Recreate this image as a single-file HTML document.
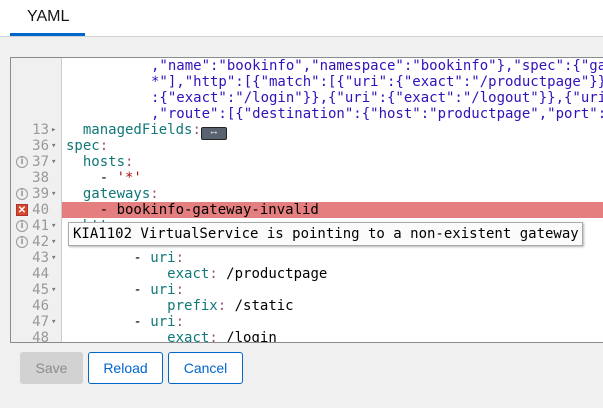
<!DOCTYPE html>
<html><head><style>
body{margin:0;width:603px;height:408px;background:#f0f0f0;font-family:"Liberation Sans",sans-serif;position:relative;overflow:hidden}
.top{position:absolute;left:0;top:0;width:603px;height:36px;background:#fff;border-bottom:1px solid #d2d2d2}
.tab{position:absolute;left:27px;top:8px;font-size:16px;color:#151515}
.tabline{position:absolute;left:10px;top:33px;width:75px;height:3px;background:#06c}
.ed{position:absolute;left:10px;top:57px;width:600px;height:284px;background:#fff;border:1px solid #8a8d90;border-right:none;overflow:hidden}
.gut{position:absolute;left:0;top:0;width:50px;height:284px;background:#f0f0f0;border-right:1px solid #ccc}
.row{position:absolute;left:0;height:16px;line-height:16px;font-family:"DejaVu Sans Mono",monospace;font-size:14px;white-space:pre}
.num{position:absolute;left:0;width:38px;text-align:right;color:#999;font-size:14px}
.code{position:absolute;left:55px;color:#000}
.k{color:#117777}.p{color:#995577}.s{color:#3311bb}.q{color:#aa1111}
.fold{position:absolute;left:40px;color:#777;font-size:9px}
.info{position:absolute;left:5px;top:2px;width:10px;height:10px;border:1.3px solid #999;border-radius:50%;font:bold 9px/10px "DejaVu Sans",sans-serif;color:#999;text-align:center}
.err{position:absolute;left:5px;top:2px;width:12px;height:12px;background:#d9472b;border:1px solid #a33;color:#fff;font:bold 10px/12px sans-serif;text-align:center;box-sizing:border-box}
.hl{position:absolute;left:51px;top:144px;width:560px;height:16px;background:#e57f7f}
.tip{position:absolute;left:68px;top:222px;width:515px;height:24px;background:#fbfbfb;border:1px solid #aaa;box-shadow:1px 1px 2px rgba(0,0,0,.3);font-family:"DejaVu Sans Mono",monospace;font-size:14px;line-height:22px;padding-left:4px;box-sizing:border-box;white-space:pre}
.btn{position:absolute;top:352px;height:32px;border:1px solid #06c;border-radius:3px;background:#fff;color:#06c;font-size:14px;line-height:30px;text-align:center;box-sizing:border-box}
</style></head><body>
<div class="top"><div class="tab">YAML</div><div class="tabline"></div></div>
<div class="ed">
<div class="gut"></div>
<div class="hl"></div>
<div class="row" style="top:0"><span class="code" style="left:140px"><span class="s">,"name":"bookinfo","namespace":"bookinfo"},"spec":{"gateways"</span></span></div>
<div class="row" style="top:16px"><span class="code" style="left:140px"><span class="s">*"],"http":[{"match":[{"uri":{"exact":"/productpage"}},</span></span></div>
<div class="row" style="top:32px"><span class="code" style="left:140px"><span class="s">:{"exact":"/login"}},{"uri":{"exact":"/logout"}},{"uri"</span></span></div>
<div class="row" style="top:48px"><span class="code" style="left:140px"><span class="s">,"route":[{"destination":{"host":"productpage","port":{</span></span></div>
<div class="row" style="top:64px;width:600px"><span class="num">13</span><span class="fold">▸</span><span class="code">  <span class="k">managedFields</span><span class="p">:</span><span style="display:inline-block;width:24px;height:11px;background:#5a6270;border:1px solid #222;border-radius:2px;vertical-align:-1px;color:#ccc;font-size:9px;line-height:10px;text-align:center">⟷</span></span></div>
<div class="row" style="top:80px;width:600px"><span class="num">36</span><span class="fold">▾</span><span class="code"><span class="k">spec</span><span class="p">:</span></span></div>
<div class="row" style="top:96px;width:600px"><span class="info">i</span><span class="num">37</span><span class="fold">▾</span><span class="code">  <span class="k">hosts</span><span class="p">:</span></span></div>
<div class="row" style="top:112px;width:600px"><span class="num">38</span><span class="code">    - <span class="q">'*'</span></span></div>
<div class="row" style="top:128px;width:600px"><span class="info">i</span><span class="num">39</span><span class="fold">▾</span><span class="code">  <span class="k">gateways</span><span class="p">:</span></span></div>
<div class="row" style="top:144px;width:600px"><span class="err">✕</span><span class="num">40</span><span class="code">    - bookinfo-gateway-invalid</span></div>
<div class="row" style="top:160px;width:600px"><span class="info">i</span><span class="num">41</span><span class="fold">▾</span><span class="code">  <span class="k">http</span><span class="p">:</span></span></div>
<div class="row" style="top:176px;width:600px"><span class="info">i</span><span class="num">42</span><span class="fold">▾</span></div>
<div class="row" style="top:192px;width:600px"><span class="num">43</span><span class="fold">▾</span><span class="code">        - <span class="k">uri</span><span class="p">:</span></span></div>
<div class="row" style="top:208px;width:600px"><span class="num">44</span><span class="code">            <span class="k">exact</span><span class="p">:</span> /productpage</span></div>
<div class="row" style="top:224px;width:600px"><span class="num">45</span><span class="fold">▾</span><span class="code">        - <span class="k">uri</span><span class="p">:</span></span></div>
<div class="row" style="top:240px;width:600px"><span class="num">46</span><span class="code">            <span class="k">prefix</span><span class="p">:</span> /static</span></div>
<div class="row" style="top:256px;width:600px"><span class="num">47</span><span class="fold">▾</span><span class="code">        - <span class="k">uri</span><span class="p">:</span></span></div>
<div class="row" style="top:272px;width:600px"><span class="num">48</span><span class="code">            <span class="k">exact</span><span class="p">:</span> /login</span></div>
</div>
<div class="tip">KIA1102 VirtualService is pointing to a non-existent gateway</div>
<div class="btn" style="left:20px;width:63px;background:#d2d2d2;border-color:#d2d2d2;color:#8a8d90">Save</div>
<div class="btn" style="left:88px;width:75px">Reload</div>
<div class="btn" style="left:168px;width:75px">Cancel</div>
</body></html>
